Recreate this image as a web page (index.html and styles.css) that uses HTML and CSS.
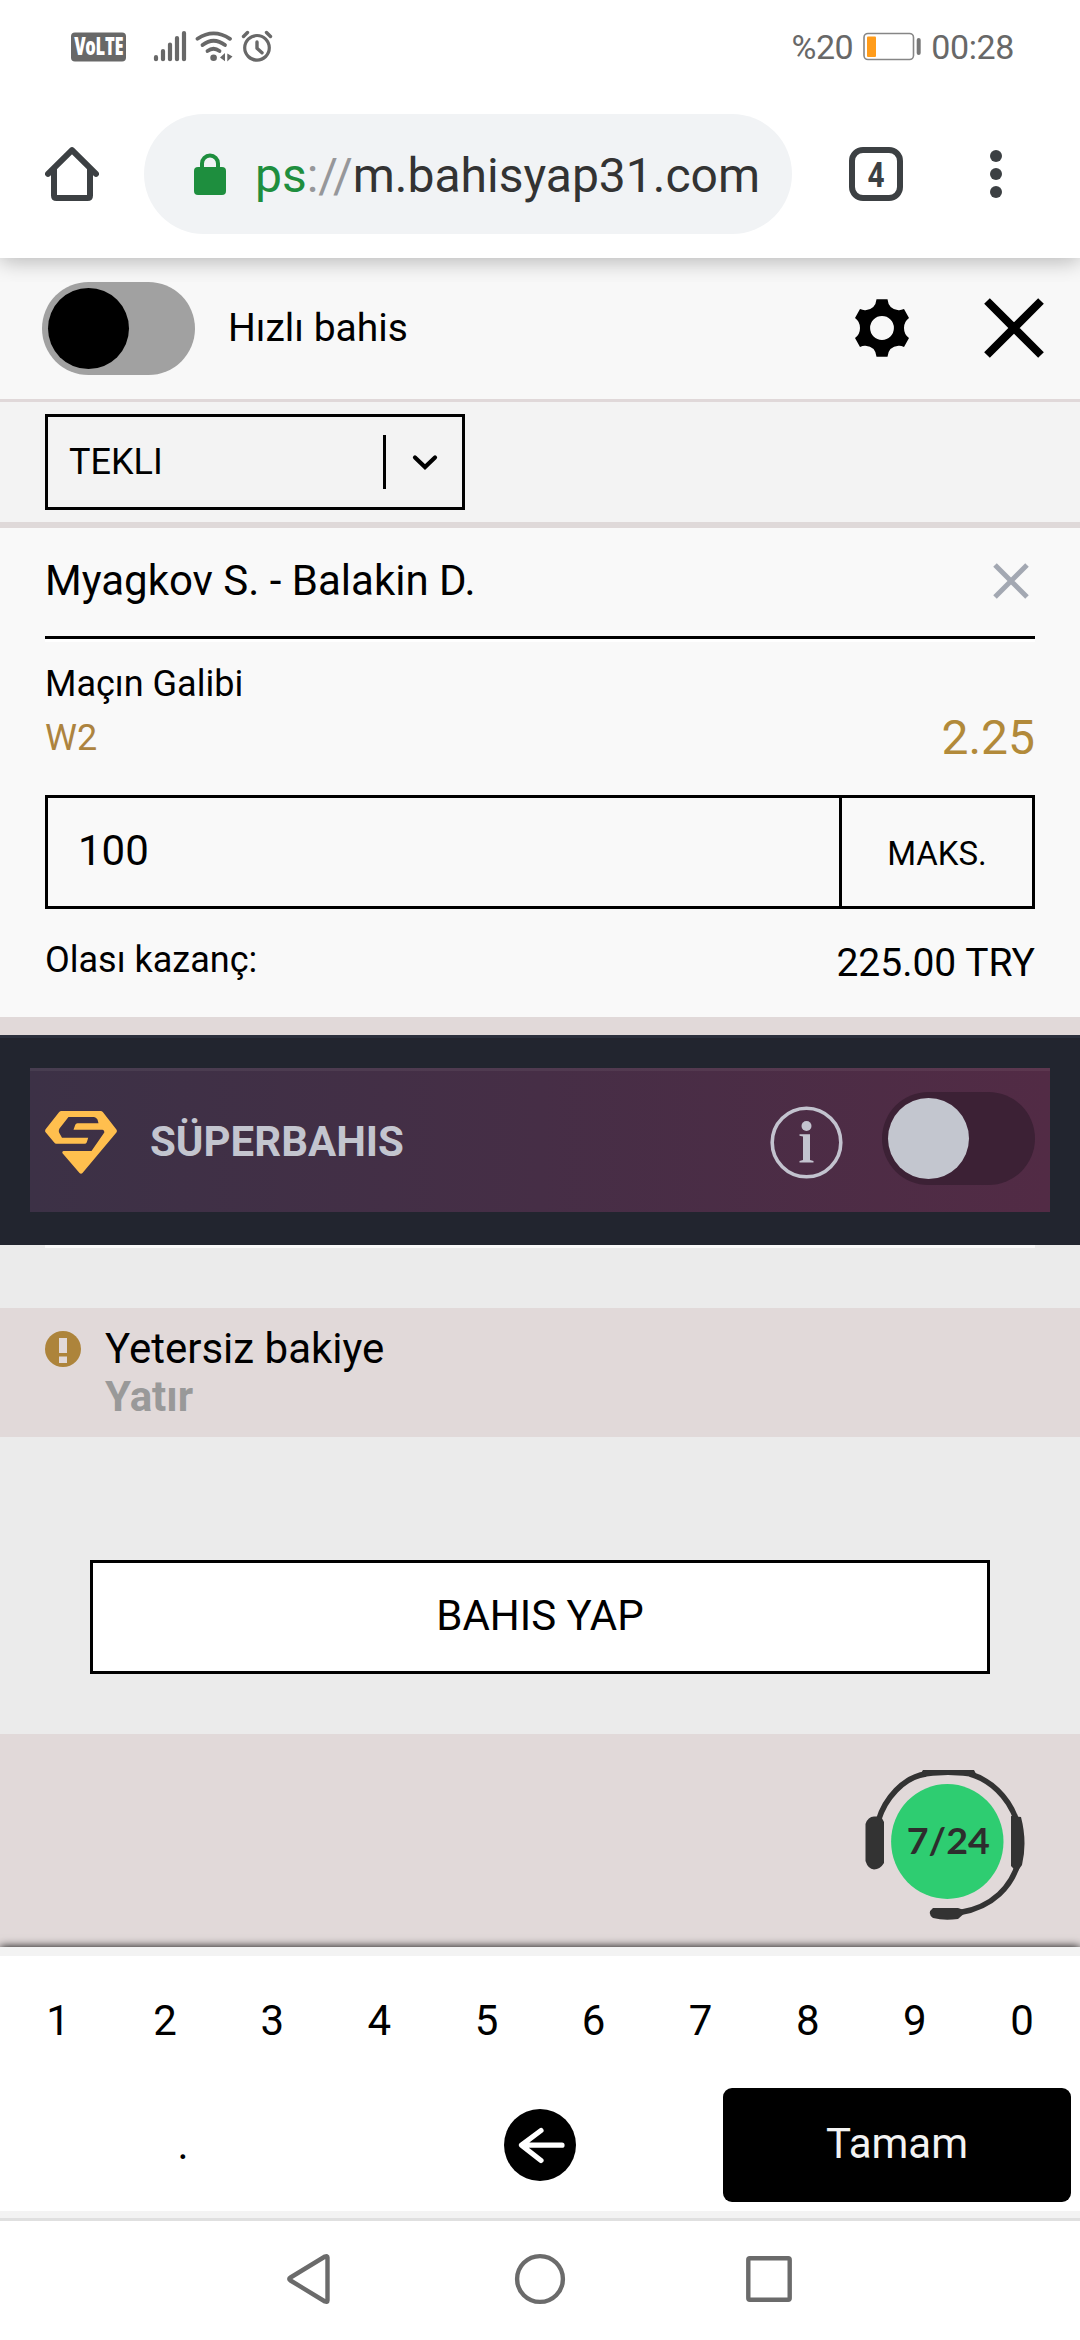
FILE: index.html
```html
<!DOCTYPE html>
<html lang="tr">
<head>
<meta charset="utf-8">
<title>Bahis Kuponu</title>
<link rel="stylesheet" href="styles.css">
</head>
<body>
<div class="screen">
  <div class="status">
    <svg class="status-icons" width="204" height="34" viewBox="70 29 204 34">
      <rect x="71" y="31.5" width="55" height="29" rx="4" fill="#686868"/>
      <text class="volte" x="98.7" y="54" text-anchor="middle" textLength="49" lengthAdjust="spacingAndGlyphs">VoLTE</text>
      <path d="M156 56.2V58.2M163 50V58.2M170 43.5V58.2M177 37V58.2M184 32V58.2" stroke="#686868" stroke-width="4.2" stroke-linecap="round" fill="none"/>
      <g fill="none" stroke="#686868" stroke-width="3.8" stroke-linecap="round">
        <path d="M197.500 37.800Q213.500 27 230 37.800"/>
        <path d="M202.500 44Q213.500 35.500 225 44"/>
        <path d="M207.500 50Q213.500 45.500 219.500 50"/>
      </g>
      <circle cx="213.600" cy="56.700" r="3.300" fill="#686868"/>
      <path d="M220 56.500L225 52V60.200ZM232.500 55.500L227.300 60.500V52.500Z" fill="#686868"/>
      <circle cx="257" cy="46.800" r="12.300" fill="none" stroke="#686868" stroke-width="3.200"/>
      <path d="M257 41V47.200L262 51.800M243.500 35.500L247.500 31.500M270.500 35.500L266.500 31.500" fill="none" stroke="#686868" stroke-width="3.400" stroke-linecap="round" stroke-linejoin="round"/>
    </svg>
    <div class="status-right">
      <span>%20</span>
      <svg width="58" height="29" viewBox="862 31 58 29">
        <rect x="863" y="32.500" width="49.500" height="26" rx="4" fill="none" stroke="#868686" stroke-width="1.600"/>
        <rect x="866" y="35.500" width="9" height="20.500" rx="1" fill="#ff9c1b"/>
        <rect x="915.700" y="37" width="4" height="17" rx="2" fill="#777"/>
      </svg>
      <span class="clock">00:28</span>
    </div>
  </div>

  <div class="toolbar">
    <svg class="home" width="54" height="56" viewBox="45 146 54 56">
      <path d="M48 173.800L72 150.200L96 173.800M54 169V195.500Q54 198 56.500 198H87.500Q90 198 90 195.500V169" fill="none" stroke="#3c4043" stroke-width="6" stroke-linecap="round" stroke-linejoin="round"/>
    </svg>
    <div class="address">
      <svg width="32" height="42" viewBox="0 0 32 42">
        <path d="M8 17V10.500a8 8 0 0 1 16 0V17" fill="none" stroke="#1e8e3e" stroke-width="4"/>
        <rect y="14" width="32" height="28" rx="4" fill="#1e8e3e"/>
      </svg>
      <div class="url"><span class="scheme">ps</span><span class="slashes">://</span>m.bahisyap31.com</div>
    </div>
    <div class="tabs"><span>4</span></div>
    <svg class="dots" width="12" height="48" viewBox="0 0 12 48" fill="#3c4043"><circle cx="6" cy="6" r="6"/><circle cx="6" cy="24" r="6"/><circle cx="6" cy="42" r="6"/></svg>
  </div>

  <div class="quick">
    <div class="toggle"><i class="knob"></i></div>
    <span class="quick-label">Hızlı bahis</span>
    <svg class="gear" width="54" height="58" viewBox="-27 -29 54 58">
      <path fill-rule="evenodd" d="M-5.500 -28.700H5.500Q6.500 -18.500 16.500 -17.800Q19 -17.600 22 -18.900L27 -10Q22 -6.500 22 0Q22 6.500 27 10L22 18.900Q19 17.600 16.500 17.800Q6.500 18.500 5.500 28.700H-5.500Q-6.500 18.500 -16.500 17.800Q-19 17.600 -22 18.900L-27 10Q-22 6.500 -22 0Q-22 -6.500 -27 -10L-22 -18.900Q-19 -17.600 -16.500 -17.800Q-6.500 -18.500 -5.500 -28.700ZM0 -11.900A11.900 11.900 0 1 0 0 11.900A11.900 11.900 0 1 0 0 -11.900Z"/>
    </svg>
    <svg class="close" width="60" height="60" viewBox="0 0 60 60"><path d="M3 3L57 57M57 3L3 57" stroke="#000" stroke-width="8"/></svg>
  </div>

  <div class="type-row">
    <div class="select">
      <span>TEKLI</span>
      <i class="select-line"></i>
      <svg width="26" height="16" viewBox="0 0 26 16"><path d="M3 3.500L13 13L23 3.500" fill="none" stroke="#000" stroke-width="4.200" stroke-linecap="round"/></svg>
    </div>
  </div>

  <div class="bet">
    <div class="bet-title">
      <span>Myagkov S. - Balakin D.</span>
      <svg width="36" height="36" viewBox="0 0 36 36"><path d="M2 2L34 34M34 2L2 34" stroke="#a3a8b2" stroke-width="5"/></svg>
    </div>
    <div class="market">Maçın Galibi</div>
    <div class="pick"><span>W2</span><span class="odds">2.25</span></div>
    <div class="stake">
      <div class="amount">100</div>
      <div class="max">MAKS.</div>
    </div>
    <div class="payout"><span class="payout-label">Olası kazanç:</span><span class="payout-sum">225.00 TRY</span></div>
  </div>

  <div class="super">
    <div class="super-panel">
      <svg class="gem" width="72" height="63" viewBox="0 0 72 63">
        <path fill="#ffbf4e" d="M16.500 0H55.500Q57 0 58 1.200L71.400 18.500Q72.400 20 71.400 21.500L37.500 62Q36 63.600 34.500 62L17.500 42.300Q16.800 40.500 18.500 40H46.500L59.300 21.500Q59.500 19 57.500 18.700H28.500L30.200 14Q30.700 12.300 32.500 12.300H53.500L52.500 8.500Q51 5.900 49 5.900H23.500L14.500 17.500Q13.300 19.500 14.200 21.800L17 26.700H43.200L41.800 31.200Q41.200 32.800 39.500 32.800H11.500Q10 32.800 9 31.300L.6 21.300Q-.4 20 .6 18.300L14 1.200Q15 0 16.500 0Z"/>
      </svg>
      <span class="super-name">SÜPERBAHIS</span>
      <svg class="info" width="73" height="73" viewBox="0 0 73 73">
        <circle cx="36.500" cy="36.500" r="34.300" fill="none" stroke="#c3c3cf" stroke-width="3.600"/>
        <circle cx="36.500" cy="20" r="5" fill="#c3c3cf"/>
        <path d="M29.500 28.200H40V54L43.500 55V56.500H29.500V55L33 54V30.500L29.500 29.700Z" fill="#c3c3cf"/>
      </svg>
      <div class="toggle toggle-dark"><i class="knob"></i></div>
    </div>
  </div>
  <div class="spacer"><i></i></div>

  <div class="warning">
    <svg width="36" height="36" viewBox="0 0 36 36"><circle cx="18" cy="18" r="18" fill="#ad843b"/><path d="M14 7H22V22H14ZM14 25.500H22V32H14Z" fill="#e1d9d9"/></svg>
    <div><div class="warn-line">Yetersiz bakiye</div><div class="warn-line deposit">Yatır</div></div>
  </div>

  <div class="action"><div class="place">BAHIS YAP</div></div>

  <div class="support">
    <svg width="162" height="152" viewBox="864 1769 162 152">
      <g fill="none" stroke="#333" stroke-width="5.500">
        <path d="M878.500 1820C885 1799 903 1777 926 1774"/>
        <path d="M970 1774C990 1780 1008 1796 1016.500 1820"/>
        <path d="M1018.500 1862C1012 1886 993 1907 960 1912.500"/>
      </g>
      <path d="M923 1770H974L978 1777.500Q948 1772.500 918 1777.500ZM865.500 1824Q868 1816.500 874 1816.500H881L884 1822V1863Q880 1869.500 874 1869.500Q868 1869 865.500 1861ZM1011 1816L1021 1817Q1027.500 1842 1022 1865L1017 1872L1011 1866ZM933 1908H958L967 1911L958 1919Q944 1921 933 1918Q926.500 1913 933 1908Z" fill="#333"/>
      <ellipse cx="947.300" cy="1841.500" rx="56.200" ry="57.500" fill="#2ecd71"/>
      <text class="support-text" x="948.300" y="1854" text-anchor="middle" textLength="83" lengthAdjust="spacingAndGlyphs">7/24</text>
    </svg>
  </div>

  <div class="keypad">
    <div class="digits"><span>1</span><span>2</span><span>3</span><span>4</span><span>5</span><span>6</span><span>7</span><span>8</span><span>9</span><span>0</span></div>
    <div class="keys">
      <span class="point">.</span>
      <svg width="72" height="72" viewBox="0 0 72 72"><circle cx="36" cy="36" r="36"/><path d="M37 21.500L17.500 36.200L37 51.500M19 36.200H58" fill="none" stroke="#fff" stroke-width="5.200" stroke-linecap="round" stroke-linejoin="round"/></svg>
      <div class="done">Tamam</div>
    </div>
  </div>

  <div class="nav">
    <svg width="506" height="52" viewBox="286 2253 506 52" fill="none" stroke="#6b6b6b" stroke-width="4.400" stroke-linejoin="round">
      <path d="M327.500 2257.500V2300.500Q327.500 2302.500 325 2301.500L290.500 2280.500Q288 2279 290.500 2277.500L325 2256.500Q327.500 2255.500 327.500 2257.500Z"/>
      <circle cx="540" cy="2279" r="22.900"/>
      <rect x="748.300" y="2258.300" width="41.400" height="41.400" rx="1.500"/>
    </svg>
  </div>
</div>
</body>
</html>
```

FILE: styles.css
```css
* { box-sizing: border-box; }
html { overflow: hidden; }
body { margin: 0; background: #fff; font-family: Roboto, "Liberation Sans", sans-serif; color: #000; }
svg { display: block; flex: none; }
.screen { width: 1080px; height: 2340px; display: flex; flex-direction: column; overflow: hidden; white-space: nowrap; }
.screen > div { flex: none; }

.status { height: 93px; padding: 0 66px 0 70px; display: flex; align-items: center; justify-content: space-between; color: #686868; font-size: 34px; letter-spacing: -.4px; }
.volte { font: 900 24px "Open Sans", sans-serif; fill: #fff; }
.status-right { display: flex; align-items: center; gap: 10px; }

.toolbar { height: 165px; padding: 0 78px 3px 45px; display: flex; align-items: center; position: relative; z-index: 1; background: #fff; box-shadow: 0 3px 21px rgba(0, 0, 0, .28); clip-path: inset(0 0 -24px 0); }
.address { width: 648px; height: 120px; margin-left: 45px; padding-left: 50px; border-radius: 60px; background: #f1f3f5; display: flex; align-items: center; gap: 29px; font-size: 48px; color: #333; }
.url { padding-top: 2px; }
.scheme { color: #1e8e3e; }
.slashes { color: #96979a; }
.tabs { width: 54px; height: 54px; margin-left: 57px; border: 6px solid #3c4043; border-radius: 14px; display: flex; align-items: center; justify-content: center; font-size: 35px; font-weight: 700; color: #3c4043; }
.tabs span { transform: scaleX(.85); padding-top: 2px; }
.dots { margin-left: auto; }

.quick { height: 144px; border-bottom: 3px solid #e0d8d9; background: #f8f8f8; padding: 0 36px 0 42px; display: flex; align-items: center; }
.toggle { width: 153px; height: 93px; padding: 6px; border-radius: 47px; background: #a1a1a1; }
.knob { display: block; width: 81px; height: 81px; border-radius: 50%; background: #000; }
.quick-label { margin-left: 33px; padding-bottom: 2px; font-size: 39px; }
.gear { margin: 0 0 2px auto; }
.close { margin: 0 0 2px 75px; }

.type-row { height: 126px; border-bottom: 6px solid #dfd9d9; background: #f3f3f3; padding: 12px 45px; }
.select { width: 420px; height: 96px; border: 3px solid #000; padding: 0 24px 0 21px; display: flex; align-items: center; font-size: 36px; }
.select-line { width: 3px; height: 54px; background: #000; margin-left: auto; margin-right: 26px; }

.bet { height: 507px; border-bottom: 18px solid #e1d9d9; background: #f9f9f9; padding: 0 45px; }
.bet-title { height: 111px; border-bottom: 3px solid #000; box-shadow: 0 3px #fff; padding: 0 6px 2px 0; display: flex; align-items: center; justify-content: space-between; font-size: 42px; }
.bet-title span { padding-bottom: 2px; }
.market { padding-top: 18px; font-size: 36px; line-height: 54px; }
.pick { height: 54px; display: flex; align-items: center; justify-content: space-between; font-size: 36px; color: #ad843f; }
.odds { padding-bottom: 2px; font-size: 48px; color: #b28a3a; }
.stake { height: 114px; margin-top: 30px; border: 3px solid #000; display: flex; }
.amount { flex: 1; padding: 0 0 3px 30px; display: flex; align-items: center; font-size: 42px; }
.max { width: 193px; border-left: 3px solid #000; padding-top: 3px; display: flex; align-items: center; justify-content: center; font-size: 33px; }
.payout { height: 108px; display: flex; align-items: center; justify-content: space-between; font-size: 39px; }
.payout-label { font-size: 36px; padding-bottom: 6px; }

.super { height: 210px; border-top: 3px solid #2b303d; background: #22252f; padding: 30px; }
.super-panel { height: 144px; padding: 0 15px; display: flex; align-items: center; background: linear-gradient(90deg, #3c3146, #462e46 50%, #522b45); box-shadow: inset 0 3px rgba(255, 255, 255, .06); }
.gem { margin-top: 4px; }
.super-name { margin-left: 33px; padding-top: 2px; font-size: 42px; font-weight: 700; color: #c3c5cf; }
.info { margin: 5px 39px 0 auto; }
.toggle-dark { margin-bottom: 3px; background: #3c2135; }
.toggle-dark .knob { background: #c3c6cf; }
.spacer { height: 63px; padding: 0 45px; background: #ebebeb; }
.spacer i { display: block; height: 3px; background: #f9f9f9; }

.warning { height: 129px; background: #e1d9d9; padding: 17px 45px 0; display: flex; gap: 24px; }
.warning svg { margin-top: 6px; }
.warn-line { font-size: 42px; line-height: 48px; }
.deposit { font-weight: 700; color: #999; }

.action { height: 297px; background: #ebebeb; padding: 123px 90px 0; }
.place { height: 114px; border: 3px solid #000; background: #fff; padding-bottom: 3px; display: flex; align-items: center; justify-content: center; font-size: 42px; }

.support { height: 213px; background: #e1d9d9; padding: 35px 54px 0 0; display: flex; justify-content: flex-end; }
.support-text { font: 700 36px Lato, sans-serif; fill: #2d2d2d; }

.keypad { height: 271px; border: solid #f3f3f3; border-width: 9px 0 7px; padding: 0 4.5px; background: #fff; box-shadow: 0 0 9px 0 #000; position: relative; }
.digits { height: 129px; display: grid; grid-template-columns: repeat(10, 1fr); align-items: center; justify-items: center; font-size: 42px; }
.keys { height: 120px; display: grid; grid-template-columns: repeat(3, 1fr); align-items: center; justify-items: center; font-size: 42px; }
.point { padding-bottom: 2px; }
.done { width: 348px; height: 114px; padding-bottom: 3px; border-radius: 9px; background: #000; color: #f3f3f3; display: flex; align-items: center; justify-content: center; }

.nav { height: 122px; border-top: 3px solid #e0e0e0; background: #fff; padding: 32px 0 0 286px; position: relative; }
```
